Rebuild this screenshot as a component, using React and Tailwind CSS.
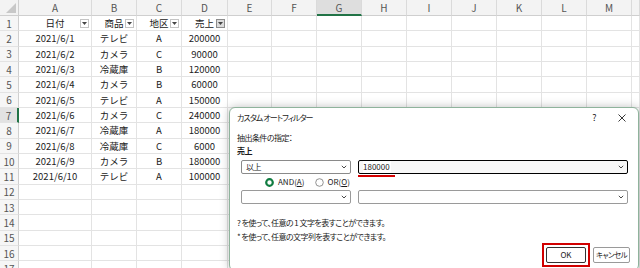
import React from 'react';

const COLS = ['A', 'B', 'C', 'D', 'E', 'F', 'G', 'H', 'I', 'J', 'K', 'L', 'M', ''];

const ROWS = [
    ['日付', '商品', '地区', '売上'],
    ['2021/6/1', 'テレビ', 'A', '200000'],
    ['2021/6/2', 'カメラ', 'C', '90000'],
    ['2021/6/3', '冷蔵庫', 'B', '120000'],
    ['2021/6/4', 'カメラ', 'B', '60000'],
    ['2021/6/5', 'テレビ', 'A', '150000'],
    ['2021/6/6', 'カメラ', 'C', '240000'],
    ['2021/6/7', '冷蔵庫', 'A', '180000'],
    ['2021/6/8', '冷蔵庫', 'C', '6000'],
    ['2021/6/9', 'カメラ', 'B', '180000'],
    ['2021/6/10', 'テレビ', 'A', '100000'],
];

const font = "font-['Noto_Sans_CJK_JP',sans-serif]";

function FilterButton({ active }) {
    return (
        <span className={`absolute right-[2px] top-[3px] w-[9px] h-[9px] flex items-center justify-center border ${active ? 'border-[#8c8c8c] bg-[#dcdcdc]' : 'border-[#c4c4c4] bg-white'}`}>
            <svg width="5" height="3" viewBox="0 0 5 3"><path d="M0 0h5L2.5 3z" fill="#444" /></svg>
        </span>
    );
}

function Chevron() {
    return (
        <svg width="6" height="4" viewBox="0 0 6 4" className="mr-[3px]">
            <path d="M0.8 0.8L3 3L5.2 0.8" fill="none" stroke="#333" strokeWidth="0.9" />
        </svg>
    );
}

function Sheet() {
    const cells = [];
    // corner
    cells.push(
        <div key="corner" className="bg-[#f3f3f3] border-r border-b border-[#cfcfcf] flex items-end justify-end p-[2px]">
            <svg width="10" height="10" viewBox="0 0 10 10"><path d="M10 0V10H0z" fill="#c8c8c8" /></svg>
        </div>
    );
    COLS.forEach((c, i) => {
        const sel = c === 'G';
        cells.push(
            <div key={'h' + i} className={`flex items-center justify-center text-[10px] text-[#555] border-r border-[#dadada] ${sel ? 'bg-[#dedede] border-b-2 border-b-[#217346]' : 'bg-[#f3f3f3] border-b border-b-[#cfcfcf]'}`}>
                {c}
            </div>
        );
    });
    for (let r = 1; r <= 17; r++) {
        const selRow = r === 7;
        cells.push(
            <div key={'r' + r} className={`flex items-center justify-center text-[10px] text-[#555] border-b border-[#e3e3e3] ${selRow ? 'bg-[#e2e2e2] border-r-2 border-r-[#217346]' : 'bg-[#f6f6f6] border-r border-r-[#cfcfcf]'}`}>
                {r}
            </div>
        );
        COLS.forEach((c, i) => {
            const v = ROWS[r - 1] && ROWS[r - 1][i];
            cells.push(
                <div key={r + '-' + i} className="relative flex items-center justify-center text-[9.5px] text-[#222] border-r border-b border-[#e3e3e3] bg-white whitespace-nowrap">
                    {v}
                    {r === 1 && i < 4 && <FilterButton active={i === 3} />}
                </div>
            );
        });
    }
    return (
        <div className="grid grid-cols-[19px_73px_45px_45px_46px_44px_45px_45px_45px_45px_45px_45px_45px_45px_1fr] grid-rows-[16px_repeat(17,15.33px)]">
            {cells}
        </div>
    );
}

function Dialog() {
    return (
        <div className={`absolute left-[229px] top-[107px] w-[410px] h-[164px] bg-white rounded-[6px] border border-[#8fb39c] shadow-[0_0_10px_rgba(0,0,0,0.25)] text-[8px] tracking-[-0.55px] text-[#1a1a1a] [font-feature-settings:'palt'] flex flex-col whitespace-nowrap`}>
            {/* Title bar */}
            <div className="h-[20px] flex items-center pl-[7px] pr-[12px]">
                <span className="flex-1 tracking-[-0.9px]">カスタム オートフィルター</span>
                <span className="text-[9px] mr-[22px]">?</span>
                <svg width="8" height="8" viewBox="0 0 8 8"><path d="M0.5 0.5L7.5 7.5M7.5 0.5L0.5 7.5" stroke="#222" strokeWidth="0.9" /></svg>
            </div>
            <div className="h-[3px]" />
            <div className="pl-[7px] h-[13px] flex items-center">抽出条件の指定：</div>
            <div className="pl-[7px] h-[13px] flex items-center font-bold">売上</div>
            {/* Row 1 */}
            <div className="mt-[3px] pl-[11px] flex gap-[7px] h-[14px]">
                <div className="w-[110px] h-full rounded-[2px] border border-[#8a8a8a] bg-white flex items-center justify-between pl-[4px]">
                    <span>以上</span>
                    <Chevron />
                </div>
                <div className="relative w-[270px] h-full rounded-[2px] border border-black bg-[#f7f7f7] flex items-center justify-between pl-[4px]">
                    <span className="bg-white pr-[1px] tracking-normal">180000</span>
                    <Chevron />
                    <span className="absolute left-[-1px] bottom-[-4px] w-[37px] h-[2px] bg-[#d40000]" />
                </div>
            </div>
            {/* Radio */}
            <div className="h-[16px] flex items-center pl-[35px] tracking-normal">
                <svg width="9" height="9" viewBox="0 0 9 9"><circle cx="4.5" cy="4.5" r="3.3" fill="white" stroke="#107c41" strokeWidth="2.2" /></svg>
                <span className="ml-[4px]">AND(<span className="underline">A</span>)</span>
                <svg width="9" height="9" viewBox="0 0 9 9" className="ml-[11px]"><circle cx="4.5" cy="4.5" r="3.8" fill="white" stroke="#777" strokeWidth="0.8" /></svg>
                <span className="ml-[3px]">OR(<span className="underline">O</span>)</span>
            </div>
            {/* Row 2 */}
            <div className="pl-[11px] flex gap-[7px] h-[14px]">
                <div className="w-[110px] h-full rounded-[2px] border border-[#9a9a9a] bg-white flex items-center justify-end">
                    <Chevron />
                </div>
                <div className="w-[270px] h-full rounded-[2px] border border-[#9a9a9a] bg-white flex items-center justify-end">
                    <Chevron />
                </div>
            </div>
            <div className="h-[12px]" />
            <div className="pl-[7px] h-[14px] flex items-center">? を使って、任意の 1 文字を表すことができます。</div>
            <div className="pl-[7px] h-[14px] flex items-center">* を使って、任意の文字列を表すことができます。</div>
            {/* Buttons */}
            <div className="flex justify-end items-center pr-[8px] mt-[-1px] gap-[3px]">
                <div className="border-2 border-[#d10000] p-[2px]">
                    <div className="w-[40px] h-[16px] rounded-[2px] border border-[#333] bg-white flex items-center justify-center tracking-normal">OK</div>
                </div>
                <div className="w-[37px] h-[16px] rounded-[2px] border border-[#9a9a9a] bg-white flex items-center justify-center text-[7.5px] tracking-[-0.6px]">キャンセル</div>
            </div>
        </div>
    );
}

export default function App() {
    return (
        <div className={`relative w-[640px] h-[268px] overflow-hidden bg-white ${font}`}>
            <Sheet />
            <Dialog />
        </div>
    );
}
